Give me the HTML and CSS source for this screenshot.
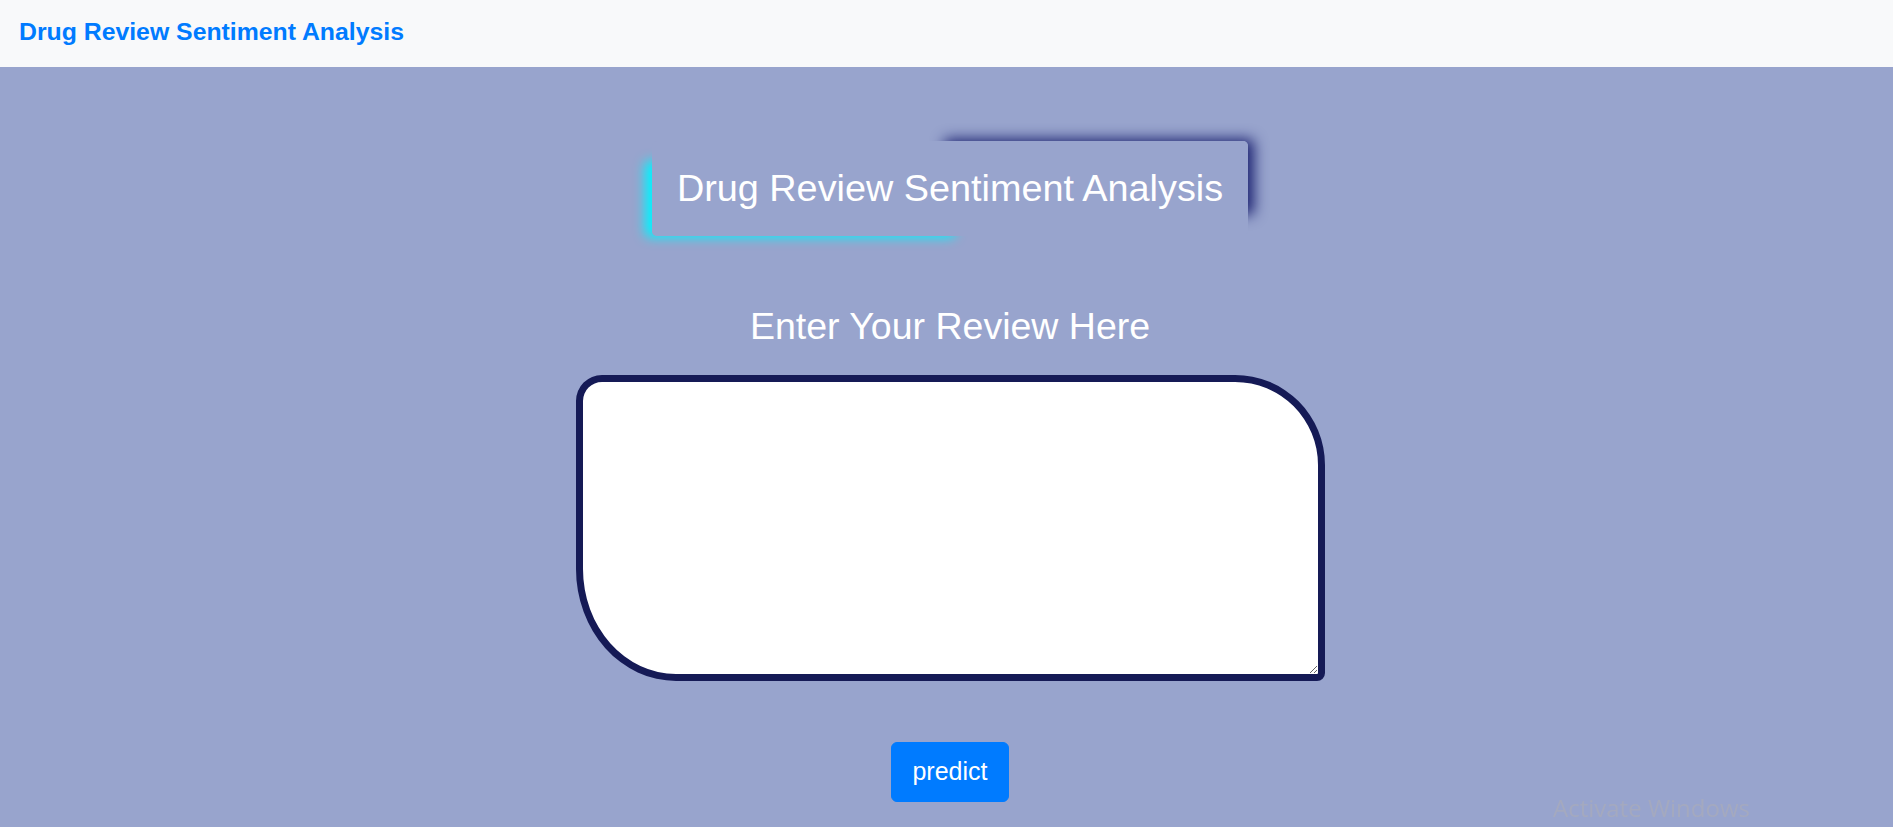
FILE: index.html
```html
<!DOCTYPE html>
<html lang="en">
<head>
<meta charset="utf-8">
<title>Drug Review Sentiment Analysis</title>
<link rel="stylesheet" href="styles.css">
</head>
<body>
<nav class="navbar">
  <a class="brand" href="#">Drug Review Sentiment Analysis</a>
</nav>
<main class="content">
  <h1 class="hero">Drug Review Sentiment Analysis</h1>
  <h2 class="prompt">Enter Your Review Here</h2>
  <textarea class="review"></textarea>
  <button class="predict" type="button">predict</button>
</main>
<div class="watermark">Activate Windows</div>
</body>
</html>
```
FILE: styles.css
```css
html, body {
  margin: 0;
  padding: 0;
}
body {
  background: #98a4cd;
  font-family: "Liberation Sans", Arial, sans-serif;
  min-height: 827px;
  overflow: hidden;
}
.navbar {
  box-sizing: border-box;
  height: 67px;
  background: #f8f9fa;
  padding: 13px 19px 0;
}
.brand {
  font-weight: bold;
  font-size: 24.8px;
  line-height: 37.5px;
  color: #007bff;
  text-decoration: none;
}
.content {
  display: flex;
  flex-direction: column;
  align-items: center;
  padding-left: 7px;
}
.hero {
  position: relative;
  margin: 74px 0 0;
  padding: 25px 25px;
  font-size: 37.8px;
  line-height: 45px;
  font-weight: normal;
  color: #ffffff;
  background: #98a4cd;
  border-radius: 5px;
}
.hero::before,
.hero::after {
  content: "";
  position: absolute;
  width: 52%;
  height: 80%;
  z-index: -1;
  border-radius: 5px;
}
.hero::before {
  left: 0;
  bottom: 0;
  box-shadow: -7px 1px 12px #00f4ff;
}
.hero::after {
  right: 0;
  top: 0;
  box-shadow: 6px -2px 14px #1d2372;
}
.prompt {
  margin: 68px 0 0;
  font-size: 37.5px;
  line-height: 45px;
  font-weight: normal;
  color: #ffffff;
}
.review {
  box-sizing: border-box;
  display: block;
  width: 749px;
  height: 306px;
  margin-top: 26px;
  border: 7px solid #151a56;
  border-radius: 26px 90px 8px 100px / 26px 90px 8px 112px;
  background: #ffffff;
  outline: none;
}
.predict {
  margin-top: 61px;
  padding: 10px 20px;
  border: 1px solid #007bff;
  border-radius: 6px;
  background: #007bff;
  color: #ffffff;
  font-family: "Liberation Sans", Arial, sans-serif;
  font-size: 25px;
  line-height: 37.5px;
}
.watermark {
  position: fixed;
  left: 1553px;
  top: 796px;
  font-family: "Open Sans", sans-serif;
  font-size: 24px;
  line-height: 24px;
  color: #a4a9bf;
  white-space: nowrap;
}
```
